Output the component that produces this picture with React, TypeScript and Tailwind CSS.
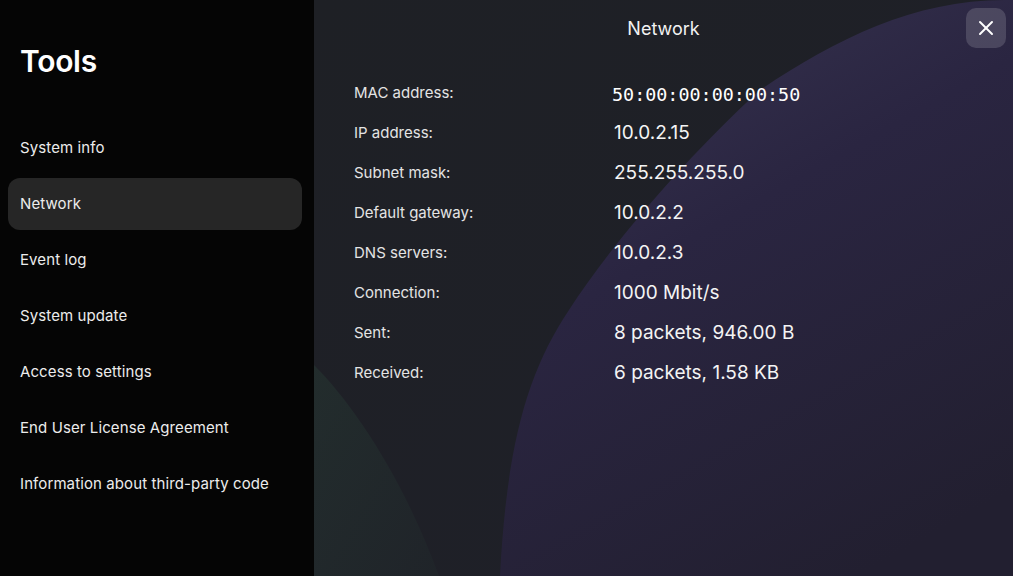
import { X } from "lucide-react";

const MENU = [
  "System info",
  "Network",
  "Event log",
  "System update",
  "Access to settings",
  "End User License Agreement",
  "Information about third-party code",
];

const ROWS: { label: string; value: string; mono?: boolean }[] = [
  { label: "MAC address:", value: "50:00:00:00:00:50", mono: true },
  { label: "IP address:", value: "10.0.2.15" },
  { label: "Subnet mask:", value: "255.255.255.0" },
  { label: "Default gateway:", value: "10.0.2.2" },
  { label: "DNS servers:", value: "10.0.2.3" },
  { label: "Connection:", value: "1000 Mbit/s" },
  { label: "Sent:", value: "8 packets, 946.00 B" },
  { label: "Received:", value: "6 packets, 1.58 KB" },
];

// ── Background wave behind the details panel ────────────────────────────────
function Backdrop() {
  return (
    <svg
      className="absolute inset-0 w-full h-full pointer-events-none"
      viewBox="0 0 699 576"
      preserveAspectRatio="none"
    >
      <defs>
        <linearGradient id="purple" x1="0.2" y1="0" x2="0.7" y2="1">
          <stop offset="0" stopColor="#36334f" />
          <stop offset="0.4" stopColor="#2a2541" />
          <stop offset="1" stopColor="#221f30" />
        </linearGradient>
        <linearGradient id="green" x1="0" y1="0" x2="1" y2="1">
          <stop offset="0" stopColor="#24312f" />
          <stop offset="1" stopColor="#20252a" />
        </linearGradient>
        <linearGradient id="base" x1="0" y1="0" x2="1" y2="1">
          <stop offset="0" stopColor="#1e2025" />
          <stop offset="1" stopColor="#1f2029" />
        </linearGradient>
      </defs>
      <rect width="699" height="576" fill="url(#base)" />
      <path d="M0 365 C 40 405, 90 480, 125 576 L 0 576 Z" fill="url(#green)" opacity="0.75" />
      <path
        d="M699 0 L 690 0 C 600 0, 520 40, 446 90 C 380 150, 300 240, 255 310 C 215 370, 193 440, 186 576 L 699 576 Z"
        fill="url(#purple)"
      />
    </svg>
  );
}

export default function App() {
  return (
    <div
      className="flex w-[1013px] h-[576px] overflow-hidden bg-[#050505] text-white"
      style={{ fontFamily: "Inter, 'Noto Sans', sans-serif" }}
    >
      {/* Sidebar */}
      <aside className="w-[314px] shrink-0 bg-[#050505] flex flex-col">
        <h1 className="px-5 pt-[42px] h-[120px] text-[30px] font-semibold tracking-[-0.3px] leading-[38px]">
          Tools
        </h1>
        <nav className="flex flex-col pl-2 pr-3 pt-[2px] gap-1">
          {MENU.map((item) => (
            <div
              key={item}
              className={`h-[52px] flex items-center px-3 rounded-xl text-[15px] tracking-[0.1px] text-[#ececec] ${
                item === "Network" ? "bg-[#262626]" : ""
              }`}
            >
              {item}
            </div>
          ))}
        </nav>
      </aside>

      {/* Details */}
      <main className="relative flex-1">
        <Backdrop />
        <div className="relative flex flex-col h-full">
          <header className="relative h-[56px] flex items-center justify-center">
            <span className="text-[18px] text-[#f2f2f2]">Network</span>
            <button className="absolute right-[7px] top-2 w-10 h-10 rounded-[10px] bg-[#ffffff26] flex items-center justify-center">
              <X size={24} strokeWidth={2} className="text-white" />
            </button>
          </header>
          <div className="flex flex-col px-10 pt-[17px]">
            {ROWS.map((r) => (
              <div key={r.label} className="h-10 flex items-center">
                <span className="w-[260px] text-[15px] text-[#e4e4e4]">{r.label}</span>
                {r.mono ? (
                  <span
                    className="text-[18.4px] text-white -ml-[2px] mt-[3px]"
                    style={{ fontFamily: "'DejaVu Sans Mono', monospace" }}
                  >
                    {r.value}
                  </span>
                ) : (
                  <span className="text-[19px] text-[#f4f4f4]">{r.value}</span>
                )}
              </div>
            ))}
          </div>
        </div>
      </main>
    </div>
  );
}
